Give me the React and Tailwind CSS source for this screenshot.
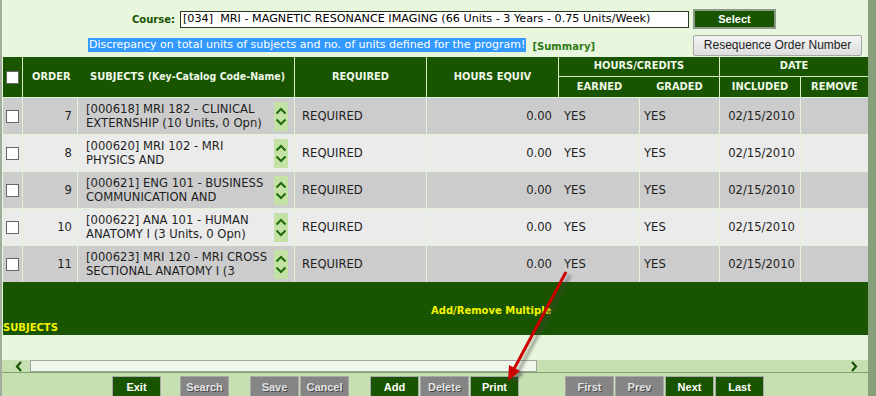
import React from 'react';

const rows = [
  { order: 7, l1: '[000618] MRI 182 - CLINICAL', l2: 'EXTERNSHIP (10 Units, 0 Opn)' },
  { order: 8, l1: '[000620] MRI 102 - MRI', l2: 'PHYSICS AND' },
  { order: 9, l1: '[000621] ENG 101 - BUSINESS', l2: 'COMMUNICATION AND' },
  { order: 10, l1: '[000622] ANA 101 - HUMAN', l2: 'ANATOMY I (3 Units, 0 Opn)' },
  { order: 11, l1: '[000623] MRI 120 - MRI CROSS', l2: 'SECTIONAL ANATOMY I (3' },
];

const condensed = { fontFamily: '"DejaVu Sans Condensed", "DejaVu Sans", sans-serif' };
const verdana = { fontFamily: '"DejaVu Sans", sans-serif' };
const arial = { fontFamily: '"Liberation Sans", Arial, sans-serif' };

function Checkbox() {
  return <div className="w-[13px] h-[13px] bg-white border border-[#666]" />;
}

function Chevron({ up }) {
  return (
    <svg width="12" height="9" viewBox="0 0 12 9">
      <path d={up ? 'M1.5 7.5 L6 3 L10.5 7.5' : 'M1.5 1.5 L6 6 L10.5 1.5'} fill="none" stroke="#1d6a0a" strokeWidth="2" />
    </svg>
  );
}

function Btn({ label, off }) {
  return (
    <div
      className={`w-[49px] h-[22px] border border-[#a8a8a8] flex items-center justify-center text-[11px] font-bold ${
        off ? 'bg-[#858585] text-[#e4e4e4] [text-shadow:1px_1px_0_#4a4a4a]' : 'bg-[#195400] text-white'
      }`}
      style={arial}
    >
      {label}
    </div>
  );
}

export default function App() {
  return (
    <div className="relative w-[876px] h-[396px] flex overflow-hidden bg-[#e7f6dd]" style={verdana}>
      <div className="w-[2px] bg-[#a3ad9c]" />
      <div className="flex-1 flex flex-col overflow-hidden">
        {/* Course selector */}
        <div className="shrink-0 h-[57px] grid grid-cols-[687px_175px] gap-x-[4px] pt-[9px]">
          <div className="flex items-center justify-end h-[20px]">
            <span className="text-[10px] font-bold text-[#195400] mr-[5px]">Course:</span>
            <div className="w-[509px] h-[17px] bg-white border border-[#2a3a20] flex items-center pl-[2px] text-[11.2px] text-black whitespace-pre overflow-hidden">
              {'[034]  MRI - MAGNETIC RESONANCE IMAGING (66 Units - 3 Years - 0.75 Units/Week)'}
            </div>
          </div>
          <div className="w-[83px] h-[20px] bg-[#195400] border-2 border-[#8a9a86] flex items-center justify-center text-[11px] font-bold text-white" style={arial}>
            Select
          </div>
          <div className="flex items-center justify-center h-[21px] mt-[4px] pr-[8px]">
            <span className="bg-[#3399ff] text-white text-[11px] leading-[14px] px-[1px]">
              Discrepancy on total units of subjects and no. of units defined for the program!
            </span>
            <span className="ml-[6px] text-[10px] font-bold text-[#2f7a16] mt-[2px]">[Summary]</span>
          </div>
          <div className="w-[169px] h-[21px] mt-[4px] rounded-[2px] border border-[#a7a7a7] bg-gradient-to-b from-[#f4f4f4] to-[#dedede] flex items-center justify-center text-[12px] text-[#222]" style={arial}>
            Resequence Order Number
          </div>
        </div>

        {/* Table header */}
        <div className="shrink-0 ml-[1px] w-[865px] grid grid-cols-[20px_55px_217px_132px_132px_81px_80px_81px_67px] grid-rows-[20px_20px] h-[40px] bg-[#195400] text-[#eef8e6] text-[11px] font-bold" style={condensed}>
          <div className="row-span-2 border-r border-[#d8ecca] flex items-center justify-center"><Checkbox /></div>
          <div className="row-span-2 flex items-center pl-[9px]">ORDER</div>
          <div className="row-span-2 border-r border-[#d8ecca] flex items-center pl-[12px] whitespace-nowrap">
            SUBJECTS&nbsp;<span className="text-[10.5px]">(Key-Catalog Code-Name)</span>
          </div>
          <div className="row-span-2 border-r border-[#d8ecca] flex items-center justify-center">REQUIRED</div>
          <div className="row-span-2 border-r border-[#d8ecca] flex items-center justify-center">HOURS EQUIV</div>
          <div className="col-span-2 border-r border-b border-[#d8ecca] flex items-center justify-center">HOURS/CREDITS</div>
          <div className="col-span-2 border-b border-[#d8ecca] flex items-center justify-center">DATE</div>
          <div className="flex items-center justify-center">EARNED</div>
          <div className="border-r border-[#d8ecca] flex items-center justify-center">GRADED</div>
          <div className="border-r border-[#d8ecca] flex items-center justify-center">INCLUDED</div>
          <div className="flex items-center justify-center">REMOVE</div>
        </div>

        {/* Rows */}
        {rows.map((r, i) => (
          <div
            key={r.order}
            className={`shrink-0 ml-[1px] w-[865px] h-[37px] grid grid-cols-[20px_55px_217px_132px_132px_81px_80px_81px_67px] border-t border-[#e2f2d8] text-[11.6px] leading-[14px] text-[#1e1e1e] ${
              i % 2 ? 'bg-[#ebebeb]' : 'bg-[#cccccc]'
            }`}
          >
            <div className="border-r border-[#e2f2d8] flex items-center justify-center"><Checkbox /></div>
            <div className="border-r border-[#e2f2d8] flex items-center justify-end pr-[5px]">{r.order}</div>
            <div className="border-r border-[#e2f2d8] flex items-center justify-between pl-[8px] pr-[6px] overflow-hidden">
              <div className="whitespace-nowrap overflow-hidden">
                <div>{r.l1}</div>
                <div>{r.l2}</div>
              </div>
              <div className="shrink-0 ml-[4px] w-[14px] h-[29px] bg-[#c4e2a6] flex flex-col items-center justify-center gap-[3px]">
                <Chevron up />
                <Chevron />
              </div>
            </div>
            <div className="border-r border-[#e2f2d8] flex items-center pl-[7px]">REQUIRED</div>
            <div className="flex items-center justify-end pr-[7px]">0.00</div>
            <div className="border-r border-[#e2f2d8] flex items-center pl-[5px]">YES</div>
            <div className="border-r border-[#e2f2d8] flex items-center pl-[4px]">YES</div>
            <div className="border-r border-[#e2f2d8] flex items-center justify-end pr-[5px]">02/15/2010</div>
            <div />
          </div>
        ))}

        {/* Add / remove band */}
        <div className="shrink-0 ml-[1px] w-[865px] h-[53px] bg-[#195400] text-[#f4f400] text-[10px] font-bold flex flex-col">
          <div className="pl-[428px] pt-[22px] leading-[14px]">Add/Remove Multiple</div>
          <div className="leading-[14px] mt-[3px]">SUBJECTS</div>
        </div>

        <div className="shrink-0 h-[25px]" />

        {/* Horizontal scrollbar */}
        <div className="shrink-0 h-[13px] bg-[#c6e0b2] border-b border-[#7f9f6f] flex items-center">
          <div className="w-[28px] flex justify-center pl-[6px]">
            <svg width="8" height="11" viewBox="0 0 8 11"><path d="M6 1 L2 5.5 L6 10" fill="none" stroke="#195400" strokeWidth="2.2" /></svg>
          </div>
          <div className="w-[507px] h-[12px] self-start bg-[#eef7e9] border border-[#a4a4a4]" />
          <div className="flex-1" />
          <div className="w-[22px] flex justify-center pr-[6px]">
            <svg width="8" height="11" viewBox="0 0 8 11"><path d="M2 1 L6 5.5 L2 10" fill="none" stroke="#195400" strokeWidth="2.2" /></svg>
          </div>
        </div>

        {/* Buttons */}
        <div className="shrink-0 h-[40px] bg-[#c6e0b2] flex items-start pt-[3px] pl-[110px]">
          <Btn label="Exit" />
          <div className="ml-[19px]"><Btn label="Search" off /></div>
          <div className="ml-[21px]"><Btn label="Save" off /></div>
          <div className="ml-[1px]"><Btn label="Cancel" off /></div>
          <div className="ml-[21px]"><Btn label="Add" /></div>
          <div className="ml-[1px]"><Btn label="Delete" off /></div>
          <div className="ml-[1px]"><Btn label="Print" /></div>
          <div className="ml-[46px]"><Btn label="First" off /></div>
          <div className="ml-[1px]"><Btn label="Prev" off /></div>
          <div className="ml-[1px]"><Btn label="Next" /></div>
          <div className="ml-[1px]"><Btn label="Last" /></div>
        </div>
      </div>
      <div className="w-[8px] bg-[#86a07a]" />

      {/* Annotation arrow */}
      <svg className="absolute inset-0 pointer-events-none" width="876" height="396">
        <defs>
          <filter id="sh" x="-20%" y="-20%" width="140%" height="140%">
            <feGaussianBlur stdDeviation="1.5" />
          </filter>
        </defs>
        <g transform="translate(4,3)" filter="url(#sh)" opacity="0.5">
          <line x1="566" y1="272" x2="514" y2="369" stroke="#444" strokeWidth="3" />
          <polygon points="508,381 520,371 509,365" fill="#444" />
        </g>
        <line x1="566" y1="272" x2="514" y2="369" stroke="#cc0000" strokeWidth="3" />
        <polygon points="508,381 520,371 509,365" fill="#cc0000" />
      </svg>
    </div>
  );
}
